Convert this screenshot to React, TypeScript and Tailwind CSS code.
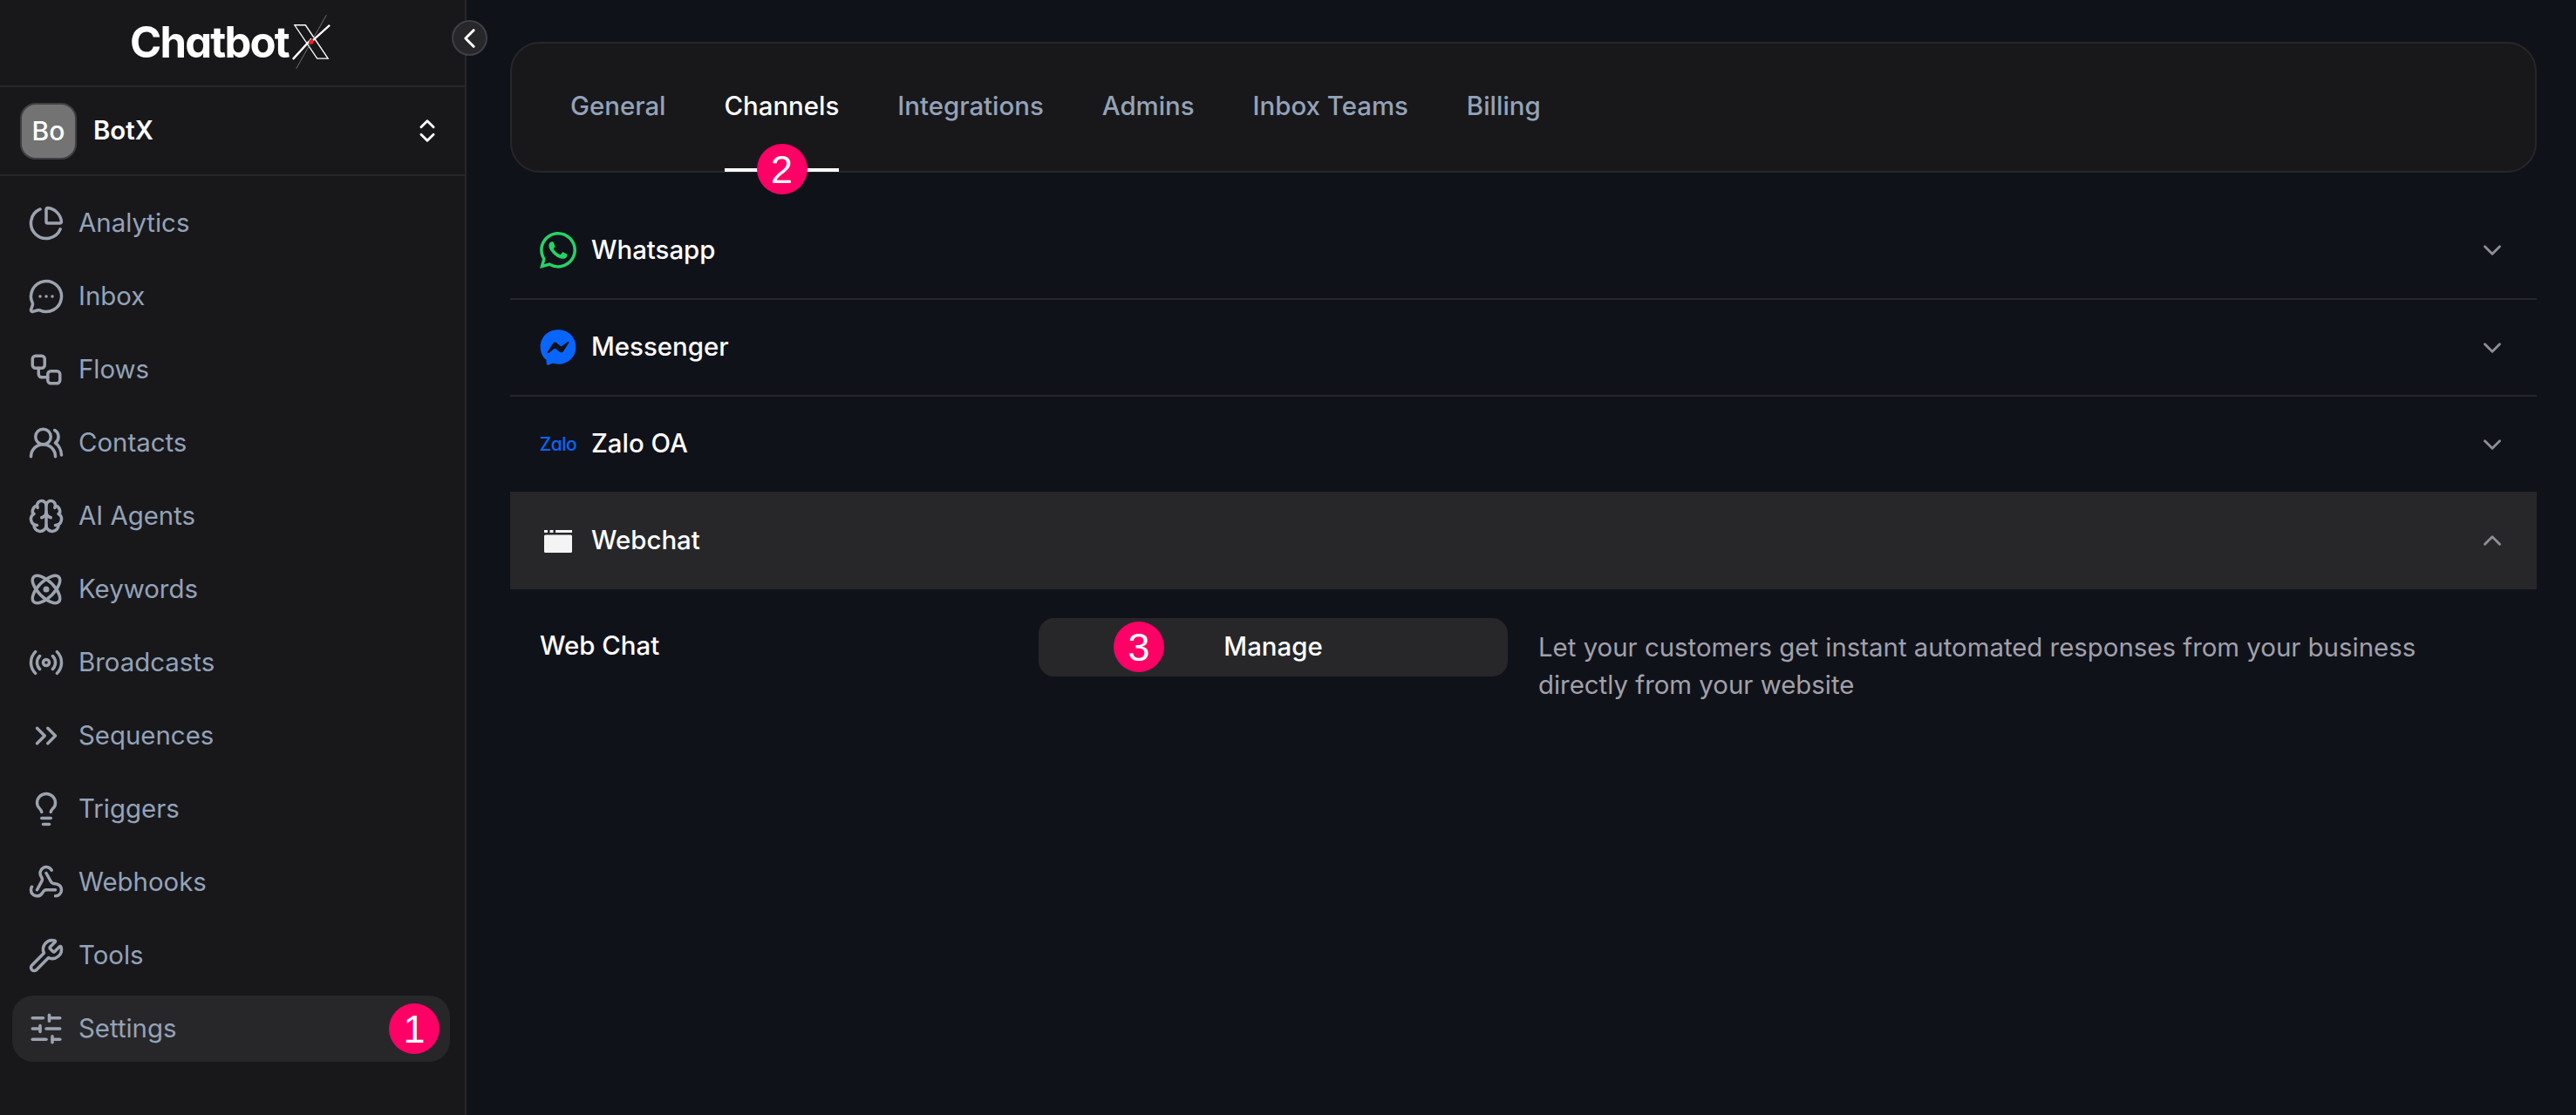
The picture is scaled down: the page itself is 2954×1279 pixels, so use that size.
import React from "react";
import {
  ChevronDown,
  ChevronLeft,
  ChevronUp,
  ChevronsUpDown,
  ChevronsRight,
  ChartPie,
  MessageCircleMore,
  Workflow,
  UsersRound,
  Brain,
  Atom,
  Radio,
  Lightbulb,
  Webhook,
  Wrench,
  SlidersHorizontal,
} from "lucide-react";
import { FaWhatsapp, FaFacebookMessenger } from "react-icons/fa";

const nav: { label: string; Icon: React.ComponentType<{ size?: number; strokeWidth?: number }> }[] = [
  { label: "Analytics", Icon: ChartPie },
  { label: "Inbox", Icon: MessageCircleMore },
  { label: "Flows", Icon: Workflow },
  { label: "Contacts", Icon: UsersRound },
  { label: "AI Agents", Icon: Brain },
  { label: "Keywords", Icon: Atom },
  { label: "Broadcasts", Icon: Radio },
  { label: "Sequences", Icon: ChevronsRight },
  { label: "Triggers", Icon: Lightbulb },
  { label: "Webhooks", Icon: Webhook },
  { label: "Tools", Icon: Wrench },
  { label: "Settings", Icon: SlidersHorizontal },
];

const Badge = ({ n, className }: { n: number; className: string }) => (
  <span className={"absolute flex h-[58px] w-[58px] items-center justify-center rounded-full bg-[#ff0066] text-[45px] leading-none text-white font-['Liberation_Sans',sans-serif] " + className}>
    {n}
  </span>
);

const Row = ({ icon, label, open, border, height }: { icon: React.ReactNode; label: string; open?: boolean; border?: boolean; height: string }) => (
  <div className={"flex items-center justify-between pl-[34px] pr-[34px] " + height + " " + (open ? "bg-[#27272a] " : "") + (border ? "border-b-2 border-[#27272a]" : "")}>
    <div className="flex items-center gap-[17px]">
      <span className="flex w-[42px] items-center justify-center">{icon}</span>
      <span className="text-[29.4px] font-medium text-white">{label}</span>
    </div>
    {open ? (
      <ChevronUp size={34} strokeWidth={2} className="text-[#8e8e94]" />
    ) : (
      <ChevronDown size={34} strokeWidth={2} className="text-[#8e8e94]" />
    )}
  </div>
);

export default function App() {
  return (
    <div className="flex h-[1279px] w-[2954px] overflow-hidden bg-[#10121a] font-['Inter',sans-serif]">
      <aside className="relative flex h-full w-[535px] shrink-0 flex-col border-r-2 border-[#27272a] bg-[#18181b]">
        <div className="flex h-[100px] items-start justify-center gap-[3px] border-b-2 border-[#27272a] pr-[4px] pt-[18px]">
          <span className="text-[49px] font-bold leading-[62px] tracking-[-1.8px] text-white [font-feature-settings:'cv11']">Chatbot</span>
          <svg width="46" height="66" viewBox="0 0 48 66" fill="none" className="-mt-[4px]">
            <path d="M2 54 L24 30 M4 14 H17 L44 54 H31 Z" stroke="#fff" strokeWidth="1.4" />
            <path d="M46 14 L26 32" stroke="#fff" strokeWidth="2.4" />
            <path d="M2 55 L21 34" stroke="#fff" strokeWidth="2.4" />
            <path d="M42 2 L6 66" stroke="#8a8a8a" strokeWidth="0.8" />
            <circle cx="24" cy="34" r="2.8" fill="#ff1a1a" />
          </svg>
        </div>
        <button className="absolute left-[518px] top-[23px] z-10 flex h-[41px] w-[41px] items-center justify-center rounded-full border-2 border-[#3f3f46] bg-[#27272a] text-white">
          <ChevronLeft size={40} strokeWidth={2} />
        </button>
        <div className="flex h-[102px] items-center justify-between border-b-2 border-[#27272a] pl-[23px] pr-[26px]">
          <div className="flex items-center gap-[19px]">
            <span className="flex h-[65px] w-[65px] items-center justify-center rounded-[18px] border-2 border-[#3f3f46] bg-[#737373] text-[30px] font-medium text-white">Bo</span>
            <span className="text-[29.4px] font-semibold text-white">BotX</span>
          </div>
          <ChevronsUpDown size={34} strokeWidth={2} className="text-white" />
        </div>
        <nav className="flex flex-col gap-[8px] pl-[14px] pr-[17px] pt-[16px]">
          {nav.map(({ label, Icon }) => (
            <div key={label} className={"relative flex h-[76px] items-center gap-[15px] rounded-[24px] pl-[16px] text-[29.4px] text-[#94a3b8] " + (label === "Settings" ? "bg-[#27272a]" : "")}>
              <span className="flex h-[45px] w-[45px] shrink-0 items-center justify-center text-[#9ca3af]">
                <Icon size={42} strokeWidth={2} />
              </span>
              <span>{label}</span>
              {label === "Settings" && <Badge n={1} className="right-[12px] top-[9px]" />}
            </div>
          ))}
        </nav>
      </aside>
      <main className="flex min-w-0 flex-1 flex-col pl-[50px] pr-[45px] pt-[48px]">
        <div className="flex h-[150px] items-start gap-[67px] rounded-[34px] border-2 border-[#27272a] bg-[#18181b] pl-[67px]">
          {["General", "Channels", "Integrations", "Admins", "Inbox Teams", "Billing"].map((t) => (
            <div key={t} className={"relative flex h-[148px] items-center pb-[4px] text-[29.4px] font-medium " + (t === "Channels" ? "text-white" : "text-[#94a3b8]")}>
              {t}
              {t === "Channels" && (
                <>
                  <span className="absolute bottom-[1px] left-0 right-0 h-[4px] bg-white" />
                  <Badge n={2} className="left-[37px] top-[115px]" />
                </>
              )}
            </div>
          ))}
        </div>
        <div className="mt-[34px] flex flex-col">
          <Row border height="h-[112px]" label="Whatsapp" icon={<FaWhatsapp size={48} className="text-[#25d366]" />} />
          <Row border height="h-[111px]" label="Messenger" icon={<FaFacebookMessenger size={43} className="text-[#0866ff]" />} />
          <Row height="h-[109px]" label="Zalo OA" icon={<span className="text-[21px] font-medium tracking-[-0.5px] text-[#0068ff] [font-feature-settings:'cv11']">Zalo</span>} />
          <Row open height="h-[112px]" label="Webchat" icon={
            <svg width="32" height="26" viewBox="0 0 32 26" fill="#f4f4f5" className="mt-[2px]">
              <rect x="0" y="0" width="4" height="3" />
              <rect x="6.5" y="0" width="4" height="3" />
              <rect x="13" y="0" width="19" height="3" />
              <rect x="0" y="5.5" width="32" height="20.5" rx="1.5" />
            </svg>
          } />
        </div>
        <div className="flex items-start pl-[34px] pt-[33px]">
          <span className="w-[572px] shrink-0 pt-[14px] text-[29.4px] font-medium leading-[36px] text-white">Web Chat</span>
          <button className="relative flex h-[67px] w-[538px] shrink-0 items-center justify-center rounded-[18px] bg-[#27272a] text-[29.4px] font-medium text-white">
            Manage
            <Badge n={3} className="left-[86px] top-[4px]" />
          </button>
          <p className="ml-[35px] w-[1111px] pt-[12px] text-[29.4px] leading-[43px] text-[#a1a1aa]">
            Let your customers get instant automated responses from your business directly from your website
          </p>
        </div>
      </main>
    </div>
  );
}
